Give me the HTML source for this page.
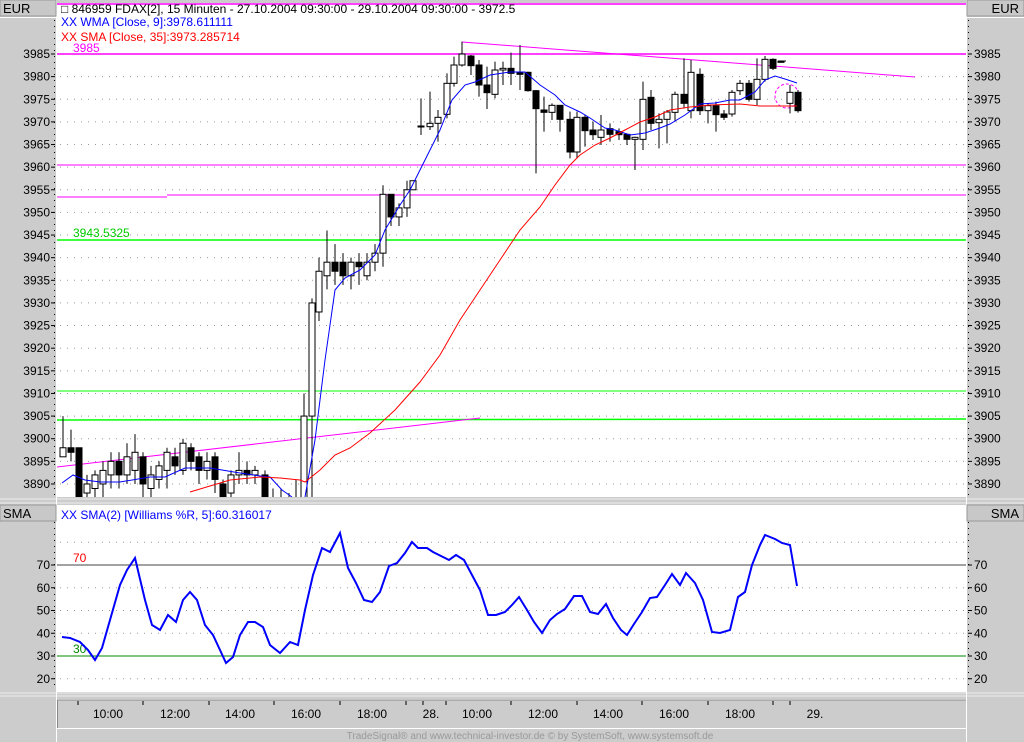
<!DOCTYPE html>
<html><head><meta charset="utf-8">
<style>
body{margin:0;background:#cccccc;width:1024px;height:742px;overflow:hidden;font-family:"Liberation Sans",sans-serif;}
svg{position:absolute;left:0;top:0}
</style></head><body>
<svg id="s" width="1024" height="742" font-family="Liberation Sans, sans-serif" font-size="12"></svg>
<script>
const s=document.getElementById('s');let h='';
function Y(p){return 54+(3985-p)*4.526;}
function W(v){return 656+(30-v)*2.275;}
h+='<defs><clipPath id="c1"><rect x="57" y="3" width="909" height="494"/></clipPath><clipPath id="c2"><rect x="57" y="505" width="909" height="187"/></clipPath></defs>';
h+='<rect x="0" y="0" width="1024" height="742" fill="#cccccc"/>';
h+='<rect x="57" y="3" width="909" height="494" fill="#fff"/>';
h+='<rect x="57" y="505" width="909" height="187" fill="#fff"/>';
h+='<line x1="0" y1="499" x2="1024" y2="499" stroke="#eee"/><line x1="0" y1="503" x2="1024" y2="503" stroke="#eee"/>';
h+='<line x1="0" y1="693" x2="1024" y2="693" stroke="#eee"/><line x1="0" y1="696" x2="1024" y2="696" stroke="#eee"/>';
h+='<rect x="57.5" y="699.5" width="909" height="29" fill="#ccc" stroke="#fff"/><line x1="57" y1="700" x2="966" y2="700" stroke="#888"/><line x1="57.5" y1="700" x2="57.5" y2="728" stroke="#888"/>';
h+='<line x1="56.5" y1="0" x2="56.5" y2="742" stroke="#fff"/><line x1="966.5" y1="0" x2="966.5" y2="742" stroke="#fff"/>';
for(const [x,w,t,y1] of [[0,56,'EUR',0],[967,57,'EUR',0],[0,56,'SMA',505],[967,57,'SMA',505]]){
 h+=`<rect x="${x}" y="${y1}" width="${w}" height="16" fill="#c8c8c8" stroke="#999"/>`;
 h+=`<text x="${x==0?3:1019}" y="${y1+13}" font-size="13" ${x==0?'':'text-anchor="end"'}>${t}</text>`;
}
h+='<line x1="0" y1="17.5" x2="56" y2="17.5" stroke="#fff"/><line x1="967" y1="17.5" x2="1024" y2="17.5" stroke="#fff"/>';
for(let p=3890;p<=3985;p+=5){const y=Y(p);
 h+=`<line x1="60" y1="${y}" x2="966" y2="${y}" stroke="#999" stroke-dasharray="1,6"/>`;
 h+=`<text x="50" y="${y+4}" text-anchor="end">${p}</text><line x1="51" y1="${y}" x2="55" y2="${y}" stroke="#000"/>`;
 h+=`<text x="974" y="${y+4}">${p}</text><line x1="968" y1="${y}" x2="972" y2="${y}" stroke="#000"/>`;}
h+='<line x1="54.5" y1="20" x2="54.5" y2="497" stroke="#000" stroke-dasharray="1,5"/><line x1="968.5" y1="20" x2="968.5" y2="497" stroke="#000" stroke-dasharray="1,5"/>';
for(const v of [20,30,40,50,60,70,80]){const y=W(v);
 h+=`<line x1="60" y1="${y}" x2="966" y2="${y}" stroke="#999" stroke-dasharray="1,6"/>`;
 if(v<80){h+=`<text x="50" y="${y+4}" text-anchor="end">${v}</text><line x1="51" y1="${y}" x2="55" y2="${y}" stroke="#000"/>`;
 h+=`<text x="974" y="${y+4}">${v}</text><line x1="968" y1="${y}" x2="972" y2="${y}" stroke="#000"/>`;}}
h+='<line x1="54.5" y1="522" x2="54.5" y2="690" stroke="#000" stroke-dasharray="1,5"/><line x1="968.5" y1="522" x2="968.5" y2="690" stroke="#000" stroke-dasharray="1,5"/>';
let g='';
g+='<line x1="57" y1="4" x2="966" y2="4" stroke="#f0f" stroke-width="1.5"/>';
g+='<line x1="57" y1="54" x2="966" y2="54" stroke="#f0f" stroke-width="1.5"/>';
g+='<line x1="57" y1="165" x2="966" y2="165" stroke="#f0f"/>';
g+='<line x1="167" y1="195" x2="966" y2="195" stroke="#f0f"/><line x1="57" y1="197" x2="167" y2="197" stroke="#f0f"/>';
g+='<line x1="57" y1="240" x2="966" y2="240" stroke="#0f0" stroke-width="1.5"/>';
g+='<line x1="57" y1="391" x2="966" y2="391" stroke="#0f0"/>';
g+='<line x1="57" y1="420" x2="966" y2="419" stroke="#0f0" stroke-width="1.5"/>';
g+='<text x="73" y="237" fill="#0c0">3943.5325</text>';
g+='<line x1="462" y1="42" x2="915" y2="77" stroke="#f0f"/><line x1="57" y1="467" x2="480" y2="418" stroke="#f0f"/>';
g+='<circle cx="787" cy="96" r="12" fill="none" stroke="#f0f" stroke-dasharray="3,2"/>';
const d1=[[63,3896,3898,3905,3896],[71,3898,3897,3902,3895],[79,3898,3875,3898,3875],[87,3888,3890,3892,3885],[95,3889,3892,3893,3886],[103,3890,3893,3895,3887],[111,3892,3895,3897,3889],[119,3895,3892,3897,3889],[127,3892,3896,3899,3890],[135,3893,3897,3901,3890],[143,3896,3890,3897,3887],[151,3889,3892,3894,3887],[159,3891,3894,3895,3889],[167,3893,3897,3898,3889],[175,3896,3894,3898,3892],[183,3893,3899,3900,3892],[191,3898,3895,3899,3893],[199,3896,3893,3897,3890],[207,3893,3895,3897,3891],[215,3896,3891,3897,3888],[223,3890,3887,3891,3885],[231,3888,3892,3893,3886],[239,3892,3893,3897,3890],[247,3893,3892,3895,3890],[255,3892,3893,3894,3890],[265,3892,3876,3893,3876],[273,3885,3886,3889,3883],[281,3886,3887,3889,3884],[289,3886,3885,3888,3883],[296,3884,3886,3891,3882],[304,3880,3905,3910,3880],[312,3905,3930,3931,3882],[319,3928,3937,3940,3926],[327,3936,3939,3946,3933],[335,3939,3937,3943,3934],[343,3939,3936,3941,3934],[351,3936,3939,3940,3933],[359,3939,3938,3941,3934],[367,3936,3939,3941,3935],[375,3939,3941,3943,3937],[383,3941,3954,3956,3938],[391,3954,3949,3954,3947],[399,3949,3951,3952,3947],[407,3951,3955,3957,3949],[413,3955,3957,3957,3955]];
function cand(x,yo,yc,yh,yl){const t=Math.min(yo,yc),b=Math.max(yo,yc),bl=yc>yo;
 let r=`<line x1="${x}" y1="${yh}" x2="${x}" y2="${yl}" stroke="#000"/>`;
 r+=`<rect x="${x-3}" y="${t}" width="6" height="${Math.max(b-t,1)}" fill="${bl?'#000':'#fff'}" stroke="#000"/>`;return r;}
for(const [x,o,c,hh,l] of d1)g+=cand(x,Y(o),Y(c),Y(hh),Y(l));
const zy=v=>30+v/3;
const d2=[[421,288,288,205,315],[430,290,280,185,300],[438,280,262,240,335],[447,253,160,130,265],[454,160,105,80,170],[462,105,72,35,110],[471,78,107,75,135],[479,105,165,90,200],[487,165,188,110,237],[495,193,120,95,205],[503,120,115,95,165],[511,115,130,68,165],[520,127,133,45,180],[528,127,182,125,185],[536,182,236,180,430],[544,240,247,200,305],[552,247,226,220,270],[560,226,268,225,305],[570,268,366,245,385],[577,366,262,245,385],[585,262,302,255,350],[593,300,314,275,330],[601,322,300,255,345],[610,296,313,280,335],[619,305,314,295,330],[627,313,328,310,345],[635,328,322,320,420],[643,328,208,155,360],[651,202,280,180,300],[659,278,268,250,355],[667,268,246,240,340],[675,247,193,185,275],[684,193,220,85,235],[691,242,127,90,265],[700,133,242,115,255],[708,242,227,220,280],[716,227,254,215,305],[724,252,262,240,270],[732,252,187,180,260],[740,182,160,150,195],[749,160,208,150,215],[757,208,148,85,225],[765,148,88,78,155],[773,88,115,85,120],[781,94,95,94,94],[790,220,187,165,250],[798,187,242,180,248]];
for(const [x,o,c,hh,l] of d2){g+=cand(x,zy(o),zy(c),zy(hh),zy(l));}
g+='<line x1="778" y1="61" x2="786" y2="61" stroke="#000"/>';
const blue=[[62,483],[73,475],[85,480],[100,482],[120,482],[150,477],[165,477],[185,468],[210,468],[240,473],[260,476],[270,477],[282,490],[292,497]];
const blue2=[[305,497],[315,440],[325,360],[335,290],[345,278],[360,270],[375,255],[385,230],[400,205],[410,190],[425,160],[440,130],[452,100],[465,85],[475,82],[490,75],[510,72],[525,72],[540,85],[555,95],[565,105],[580,112],[590,118],[605,128],[615,130],[630,135],[645,133],[660,128],[670,124],[685,115],[700,104],[715,103],[730,100],[740,100],[755,92],[765,80],[775,76],[785,79],[797,83]];
const red=[[190,492],[230,480],[260,477],[280,478],[300,480],[305,482],[320,470],[335,455],[350,448],[370,433],[395,410],[420,382],[440,355],[460,320],[480,290],[500,260],[520,230],[540,207],[555,185],[570,165],[580,155],[595,145],[610,138],[625,130],[640,122],[655,117],[670,110],[690,107],[710,105],[740,104],[760,106],[775,106],[797,106]];
const pl=(a,c,w)=>`<polyline points="${a.map(p=>p.join(',')).join(' ')}" fill="none" stroke="${c}" stroke-width="${w}"/>`;
g+=pl(blue,'#00f',1)+pl(blue2,'#00f',1)+pl(red,'#f00',1);
g+='<text x="61" y="13" fill="#000">&#x25A1; 846959  FDAX[2], 15 Minuten - 27.10.2004 09:30:00 - 29.10.2004 09:30:00 - 3972.5</text>';
g+='<text x="61" y="26" fill="#00f">XX WMA [Close, 9]:3978.611111</text>';
g+='<text x="61" y="41" fill="#f00">XX SMA [Close, 35]:3973.285714</text>';
g+='<text x="73" y="52" fill="#f0f">3985</text>';
h+=`<g clip-path="url(#c1)">${g}</g>`;
let k='';
k+='<line x1="57" y1="565" x2="966" y2="565" stroke="#444"/><line x1="57" y1="656" x2="966" y2="656" stroke="#080"/>';
k+='<text x="73" y="562" fill="#f00">70</text><text x="73" y="653" fill="#080">30</text>';
const wr=[[62,637],[70,638],[80,642],[88,650],[95,660],[102,648],[110,620],[120,585],[127,570],[135,558],[145,600],[152,625],[160,630],[168,615],[176,622],[183,600],[190,592],[197,600],[205,625],[213,635],[220,650],[226,663],[233,657],[240,635],[248,622],[255,622],[263,627],[270,645],[280,653],[290,642],[298,645],[305,610],[313,575],[322,548],[330,552],[340,533],[348,568],[356,583],[364,600],[372,602],[380,592],[389,566],[397,563],[405,553],[412,542],[418,548],[427,548],[433,552],[441,556],[449,560],[456,555],[464,560],[472,575],[480,590],[488,615],[496,615],[505,612],[512,605],[519,597],[527,610],[534,622],[542,633],[550,620],[557,614],[565,609],[574,596],[582,596],[590,612],[598,614],[606,604],[613,618],[621,630],[627,635],[634,624],[642,612],[650,598],[657,597],[665,585],[672,574],[680,585],[686,573],[695,583],[703,600],[712,632],[720,633],[730,630],[738,597],[745,592],[752,565],[760,545],[765,535],[775,539],[782,543],[790,545],[797,586]];
k+=pl(wr,'#00f',2);
k+='<text x="61" y="519" fill="#00f">XX SMA(2) [Williams %R, 5]:60.316017</text>';
h+=`<g clip-path="url(#c2)">${k}</g>`;
for(const x of [78,143,209,274,340,406,423,446,511,577,642,708,773,790])h+=`<line x1="${x}" y1="701" x2="${x}" y2="705" stroke="#000"/>`;
for(const [x,t] of [[108,'10:00'],[175,'12:00'],[240,'14:00'],[306,'16:00'],[372,'18:00'],[431,'28.'],[477,'10:00'],[543,'12:00'],[608,'14:00'],[674,'16:00'],[740,'18:00'],[815,'29.']])h+=`<text x="${x}" y="718" text-anchor="middle">${t}</text>`;
h+='<text x="530" y="739" text-anchor="middle" fill="#999" font-size="10">TradeSignal® and www.technical-investor.de © by SystemSoft, www.systemsoft.de</text>';
s.innerHTML=h;
</script>
</body></html>
